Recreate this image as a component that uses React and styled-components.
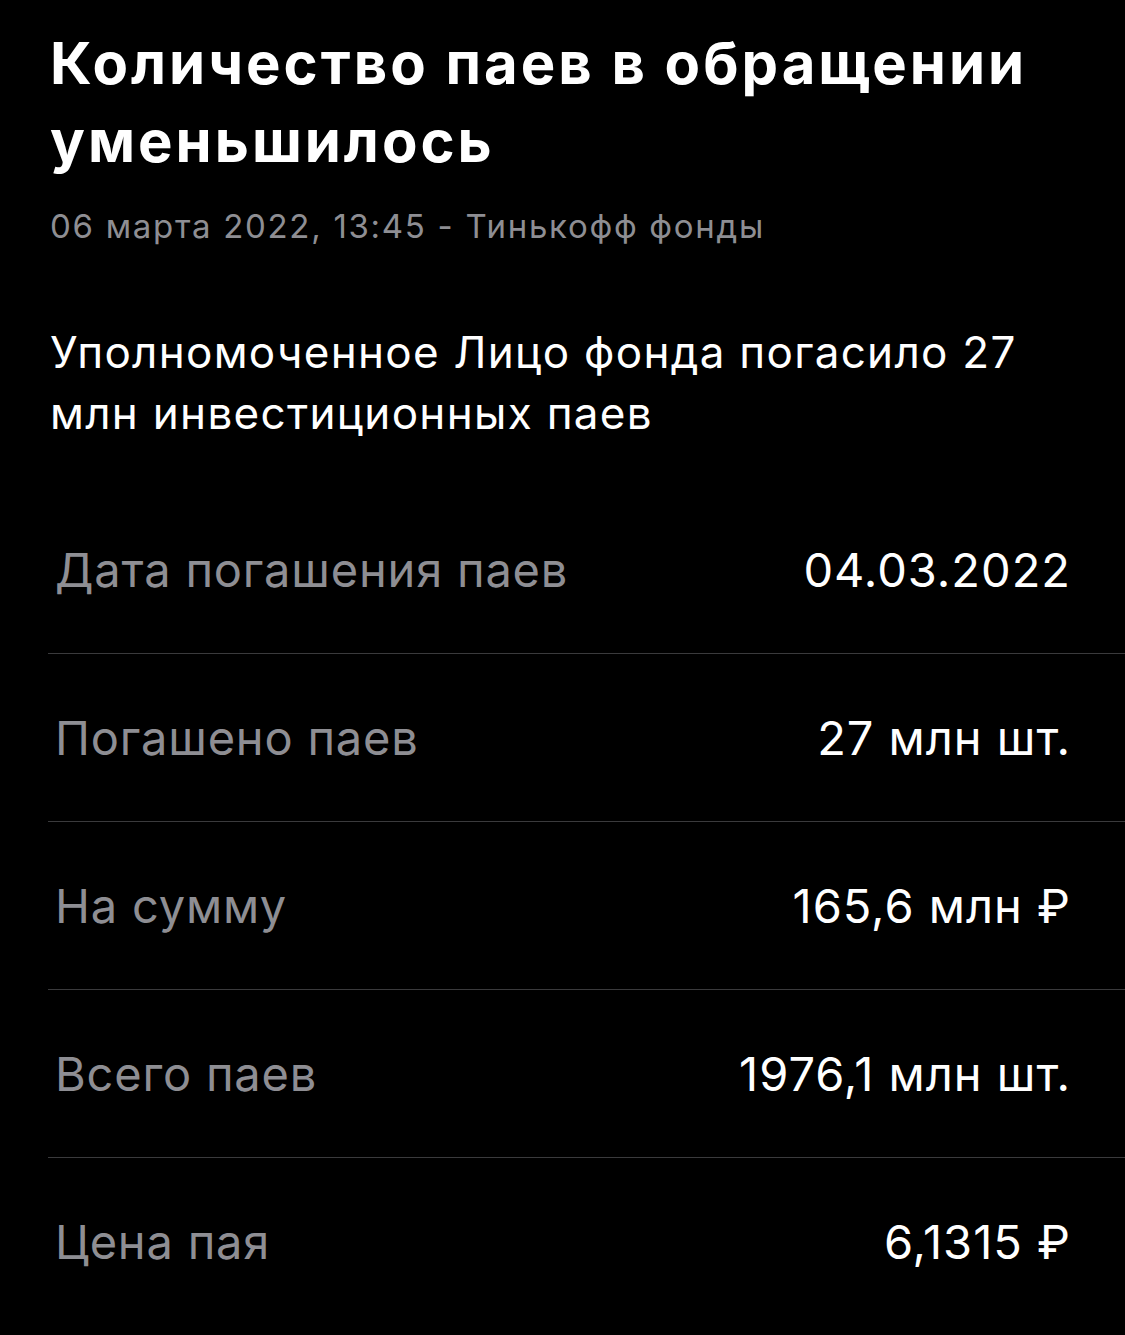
import React from 'react'
import styled, { createGlobalStyle } from 'styled-components'

const rows = [
  { label: 'Дата погашения паев', value: '04.03.2022' },
  { label: 'Погашено паев', value: '27 млн шт.' },
  { label: 'На сумму', value: '165,6 млн ₽' },
  { label: 'Всего паев', value: '1976,1 млн шт.' },
  { label: 'Цена пая', value: '6,1315 ₽' },
]

function App() {
  return (
    <Page>
      <GlobalStyle />
      <Header>
        <Title>Количество паев в обращении уменьшилось</Title>
        <Meta>06 марта 2022, 13:45 - Тинькофф фонды</Meta>
      </Header>

      <Body>Уполномоченное Лицо фонда погасило 27 млн инвестиционных паев</Body>

      <Details>
        {rows.map((row, i) => (
          <Row key={row.label} last={i === rows.length - 1}>
            <Label>{row.label}</Label>
            <Value>{row.value}</Value>
          </Row>
        ))}
      </Details>
    </Page>
  )
}

export default App

const GlobalStyle = createGlobalStyle`
  html, body {
    margin: 0;
    background: #000;
  }
  body {
    font-family: Inter, Roboto, "Noto Sans", sans-serif;
    -webkit-font-smoothing: antialiased;
  }
`;

const Page = styled.div`
  width: 1125px;
  height: 1335px;
  overflow: hidden;
  background: #000;
  color: #fff;
`;

const Header = styled.div`
  padding: 24px 40px 0 50px;
`;

const Title = styled.h1`
  margin: 0;
  font-size: 58px;
  line-height: 78px;
  font-weight: 700;
  letter-spacing: 3px;
`;

const Meta = styled.p`
  margin: 26px 0 0;
  font-size: 33px;
  line-height: 40px;
  letter-spacing: 1.7px;
  color: #8e8e93;
`;

const Body = styled.p`
  margin: 0;
  padding: 76px 60px 0 50px;
  font-size: 44px;
  line-height: 61px;
  letter-spacing: 1.3px;
`;

const Details = styled.div`
  margin-top: 42px;
  margin-left: 48px;
`;

const Row = styled.div`
  display: flex;
  align-items: center;
  justify-content: space-between;
  height: 167px;
  padding: 0 55px 0 7px;
  border-bottom: ${(p) => (p.last ? 'none' : '1px solid #3a3a3c')};
`;

const Label = styled.span`
  font-size: 47px;
  letter-spacing: 0.8px;
  color: #8e8e93;
`;

const Value = styled.span`
  font-size: 47px;
  letter-spacing: 1px;
  margin-right: -1px;
  color: #fff;
`;
